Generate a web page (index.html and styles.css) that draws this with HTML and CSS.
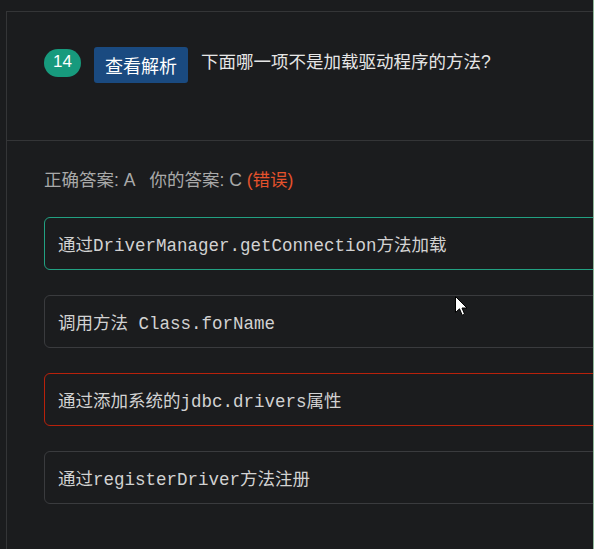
FILE: index.html
```html
<!DOCTYPE html>
<html lang="zh">
<head>
<meta charset="utf-8">
<title>题目 14</title>
<link rel="stylesheet" href="styles.css">
</head>
<body>
<div class="viewport">
  <div class="page">
    <section class="qhead">
      <span class="num">14</span>
      <button class="analysis">查看解析</button>
      <span class="qtext">下面哪一项不是加载驱动程序的方法?</span>
    </section>
    <section class="answers">
      <div class="result">
        <span>正确答案: A</span>
        <span class="yours">你的答案: C <em class="wrong">(错误)</em></span>
      </div>
      <div class="options">
        <div class="opt correct">通过DriverManager.getConnection方法加载</div>
        <div class="opt">调用方法 Class.forName</div>
        <div class="opt chosen">通过添加系统的jdbc.drivers属性</div>
        <div class="opt">通过registerDriver方法注册</div>
      </div>
    </section>
  </div>
  <svg class="cursor" width="13" height="21" viewBox="0 0 13 21">
    <path d="M0.5 0.5 L0.5 16.5 L4.5 12.8 L7.2 19.2 L9.6 18.2 L7 12 L12 12 Z" fill="#fff" stroke="#000" stroke-width="1"/>
  </svg>
</div>
</body>
</html>
```
FILE: styles.css
```css
* { box-sizing: border-box; }
html, body {
  margin: 0;
  background: #1b1c1e;
}
body {
  width: 594px;
  height: 549px;
  overflow: hidden;
  font-family: "Liberation Sans", "Noto Sans CJK SC", sans-serif;
}
.viewport {
  position: relative;
  width: 594px;
  height: 549px;
  overflow: hidden;
  border-right: 1px solid #8fb89a;
}
.page {
  margin-left: 6px;
  width: 640px;
  height: 549px;
  border-left: 1px solid #343537;
}
.qhead {
  margin-top: 11px;
  height: 130px;
  border-top: 1px solid #343537;
  border-bottom: 1px solid #343537;
  display: flex;
  align-items: flex-start;
  padding: 35px 0 0 37px;
}
.num {
  margin-top: 2px;
  width: 37px;
  height: 28px;
  border-radius: 14px;
  background: #179a7d;
  color: #fff;
  font-family: "Liberation Sans", sans-serif;
  font-size: 17px;
  line-height: 26px;
  text-align: center;
}
.analysis {
  margin-left: 13px;
  height: 36px;
  padding: 0 11px;
  border: 0;
  border-radius: 3px;
  background: #1a4a80;
  color: #fff;
  font-family: "Noto Sans CJK SC", sans-serif;
  font-size: 18px;
  line-height: 36px;
}
.qtext {
  margin-left: 13px;
  color: #e6e6e6;
  font-size: 17.5px;
  line-height: 30px;
}
.answers {
  padding: 27px 0 0 37px;
}
.result {
  display: flex;
  gap: 14px;
  color: #a9a9a9;
  font-size: 17.5px;
  line-height: 24px;
}
.wrong {
  font-style: normal;
  color: #e5522c;
}
.options {
  margin-top: 25px;
  display: flex;
  flex-direction: column;
  gap: 25px;
}
.opt {
  height: 53px;
  border: 1px solid #3a3b3e;
  border-radius: 6px;
  display: flex;
  align-items: center;
  padding-left: 13px;
  color: #d2d2d2;
  font-family: "Liberation Mono", "Noto Sans CJK SC", monospace;
  font-size: 17.5px;
}
.opt.correct { border-color: #22a182; }
.opt.chosen { border-color: #b8210b; }
.cursor {
  position: absolute;
  left: 455px;
  top: 296px;
}
```
